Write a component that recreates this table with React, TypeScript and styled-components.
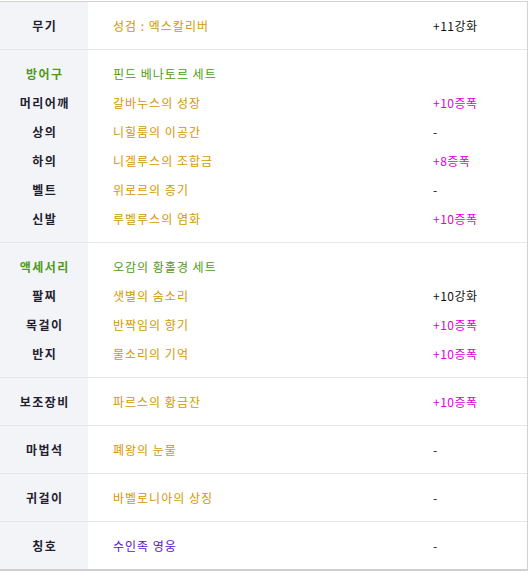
import React from "react";
import styled, { createGlobalStyle } from "styled-components";

type Tone = "item" | "set" | "title";
type ValTone = "plain" | "magic";

interface Row {
  label: string;
  group?: boolean;
  name: string;
  tone: Tone;
  value?: string;
  valTone?: ValTone;
}

const sections: Row[][] = [
  [{ label: "무기", name: "성검 : 엑스칼리버", tone: "item", value: "+11강화", valTone: "plain" }],
  [
    { label: "방어구", group: true, name: "핀드 베나토르 세트", tone: "set" },
    { label: "머리어깨", name: "갈바누스의 성장", tone: "item", value: "+10증폭", valTone: "magic" },
    { label: "상의", name: "니힐룸의 이공간", tone: "item", value: "-", valTone: "plain" },
    { label: "하의", name: "니겔루스의 조합금", tone: "item", value: "+8증폭", valTone: "magic" },
    { label: "벨트", name: "위로르의 증기", tone: "item", value: "-", valTone: "plain" },
    { label: "신발", name: "루벨루스의 염화", tone: "item", value: "+10증폭", valTone: "magic" },
  ],
  [
    { label: "액세서리", group: true, name: "오감의 황홀경 세트", tone: "set" },
    { label: "팔찌", name: "샛별의 숨소리", tone: "item", value: "+10강화", valTone: "plain" },
    { label: "목걸이", name: "반짝임의 향기", tone: "item", value: "+10증폭", valTone: "magic" },
    { label: "반지", name: "물소리의 기억", tone: "item", value: "+10증폭", valTone: "magic" },
  ],
  [{ label: "보조장비", name: "파르스의 황금잔", tone: "item", value: "+10증폭", valTone: "magic" }],
  [{ label: "마법석", name: "폐왕의 눈물", tone: "item", value: "-", valTone: "plain" }],
  [{ label: "귀걸이", name: "바벨로니아의 상징", tone: "item", value: "-", valTone: "plain" }],
  [{ label: "칭호", name: "수인족 영웅", tone: "title", value: "-", valTone: "plain" }],
];

const toneColor: Record<Tone, string> = {
  item: "#d09800",
  set: "#4e9a18",
  title: "#5a10d0",
};

function App() {
  return (
    <>
      <Global />
      <Table>
        {sections.map((rows, i) => (
          <Section key={i}>
            <LabelCol>
              {rows.map((r) => (
                <Label key={r.label} group={r.group}>
                  {r.label}
                </Label>
              ))}
            </LabelCol>
            <InfoCol>
              {rows.map((r) => (
                <Line key={r.label}>
                  <Name tone={r.tone}>{r.name}</Name>
                  <Value magic={r.valTone === "magic"}>{r.value}</Value>
                </Line>
              ))}
            </InfoCol>
          </Section>
        ))}
      </Table>
    </>
  );
}

export default App;

const Global = createGlobalStyle`
  body {
    margin: 0;
    background: #fff;
    font-family: "Noto Sans CJK KR", "Noto Sans", sans-serif;
  }
`;

const Table = styled.div`
  width: 528px;
  margin-top: 1px;
  border-top: 1px solid #d2d2d2;
  border-right: 1px solid #d2d2d2;
  border-bottom: 2px solid #cfcfcf;
  box-sizing: border-box;
`;

const Section = styled.div`
  display: grid;
  grid-template-columns: 88px 1fr;
  border-bottom: 1px solid #e6e6e6;

  &:last-child {
    border-bottom: none;
  }
`;

const LabelCol = styled.div`
  background: #f3f4f8;
  padding: 9px 0;
`;

const InfoCol = styled.div`
  padding: 9px 0;
`;

const Label = styled.div<{ group?: boolean }>`
  height: 29px;
  line-height: 29px;
  text-align: center;
  font-size: 12px;
  font-weight: bold;
  letter-spacing: 1.5px;
  text-indent: 1.5px;
  color: ${(p) => (p.group ? "#4e9a18" : "#22202e")};
`;

const Line = styled.div`
  display: grid;
  grid-template-columns: 345px 1fr;
  height: 29px;
  line-height: 29px;
  font-size: 12px;
`;

const Name = styled.span<{ tone: Tone }>`
  padding-left: 25px;
  letter-spacing: 1px;
  color: ${(p) => toneColor[p.tone]};
`;

const Value = styled.span<{ magic?: boolean }>`
  letter-spacing: 0.5px;
  color: ${(p) => (p.magic ? "#dc00dc" : "#111")};
`;
